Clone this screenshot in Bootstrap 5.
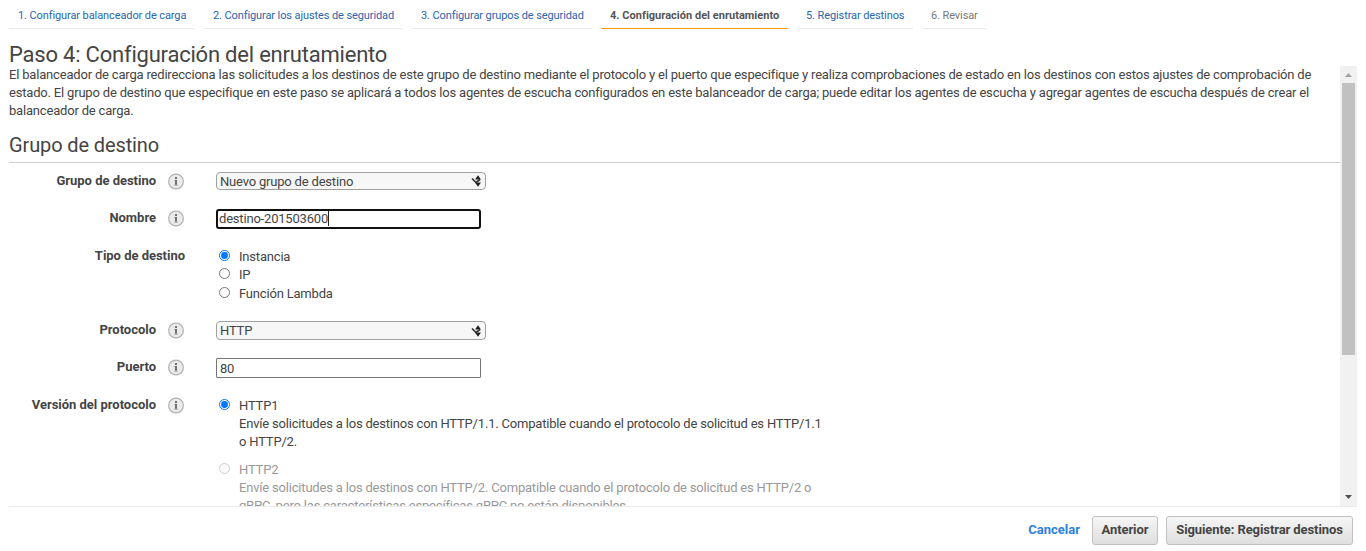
<!DOCTYPE html>
<html lang="es">
<head>
<meta charset="utf-8">
<meta name="viewport" content="width=device-width, initial-scale=1">
<title>Configuración del enrutamiento</title>
<link href="https://cdn.jsdelivr.net/npm/bootstrap@5.3.0/dist/css/bootstrap.min.css" rel="stylesheet">
<style>
body{font-family:Roboto,"Liberation Sans",sans-serif;font-size:13px;line-height:18px;letter-spacing:-.19px;color:#444;height:551px;overflow:hidden}
.steps{height:29px;gap:9px;padding-left:9px;font-size:11px;letter-spacing:-.1px}
.step{height:29px;padding:8px 0 0 9px;line-height:16px;border-bottom:1px solid #eaeaea;color:#2a65ad;text-decoration:none;white-space:nowrap}
.step.now{border-color:#ff9900;color:#555;font-weight:700;letter-spacing:.02px}
.step.later{color:#777}
.page-title{font-size:22px;line-height:26px;font-weight:400;height:37px;padding:13px 0 0 9px;margin:0;letter-spacing:-.21px}
.pane{height:440px;margin:0 9px;overflow:hidden}
.pane-body{width:1331px}
.intro{height:66px;margin:0;white-space:nowrap;letter-spacing:-.186px}
.section-title{font-size:20px;line-height:24px;font-weight:400;height:31px;margin:0;border-bottom:1px solid #ccc;padding-top:1px;letter-spacing:-.12px}
.field{height:37px}
.field-label{width:147px;text-align:right;font-weight:700;padding-top:9px;letter-spacing:-.02px;white-space:nowrap}
.field-label.wide{width:176px}
.field-label.low{padding-top:10px}
.info{width:16px;height:17px;margin:10px 32px 0 12px}
.wide + .ctl{margin-left:31px}
.ctl{padding-top:9px}
.ctl.choices{padding-top:11px}
.pick{width:270px;height:18px;border:1px solid #a0a0a0;border-radius:4px;background:#f7f7f7;padding:0 3px}
.pick.tall{height:19px}
.pick span{padding-top:2px}
.pick.tall span{padding-top:1px}
.entry{width:265px;height:20px;border:1px solid #767676;border-radius:1px;padding:0 3px;line-height:19px}
.entry.active{border:2px solid #101010;border-radius:3px;padding:0 2px 0 1px;line-height:16px}
.caret{width:1px;height:15px;background:#222}
.opt{gap:9px;padding-left:3px;white-space:nowrap}
.opt svg{width:11px;height:11px;margin-top:2px;flex:none}
.opt.third{margin-top:1px}
.opt.off{color:#999;margin-top:10px}
.bar{width:17px;background:#f1f1f1}
.thumb{width:13px;height:272px;background:#c1c1c1}
.foot{height:45px;margin:0 9px;border-top:1px solid #eaeaea;padding:9px 4px 0 0;font-weight:700;gap:8px}
.cancel{color:#2e80dd;text-decoration:none;padding:5px 4px 0 0;letter-spacing:0}
.act{height:29px;font-size:13px;font-weight:700;line-height:18px;letter-spacing:-.09px;color:#444;border:1px solid #c1c1c1;border-radius:3px;background:linear-gradient(#f6f6f6,#dedede);padding:3px 0 5px;white-space:nowrap}
</style>
<script src="https://cdn.jsdelivr.net/npm/bootstrap@5.3.0/dist/js/bootstrap.bundle.min.js"></script>
</head>
<body>
<svg class="d-none">
<defs>
<symbol id="i" viewBox="0 0 16 17"><circle cx="8" cy="8.500" r="7.400" fill="#ebebeb" stroke="#b3b3b3" stroke-width="1.200"/><path d="M7 4h2v2H7zM7 7h2v5.500H7z" fill="#707070"/><path d="M6 7h1v1H6zM6 11.500h4v1H6z" fill="#b5b5b5"/></symbol>
<symbol id="on" viewBox="0 0 11 11"><circle cx="5.500" cy="5.500" r="5" fill="#fff" stroke="#0075ff"/><circle cx="5.500" cy="5.500" r="3.400" fill="#0075ff"/></symbol>
<symbol id="no" viewBox="0 0 11 11"><circle cx="5.500" cy="5.500" r="5" fill="#fff" stroke="#767676"/></symbol>
<symbol id="dis" viewBox="0 0 11 11"><circle cx="5.500" cy="5.500" r="5" fill="#fafafa" stroke="#cfcfcf"/></symbol>
<symbol id="arr" viewBox="0 0 11 12"><path d="M7 .3 10 4.500H4zM4 7.500h6L7 11.700z" fill="#222"/><path d="m1 3.500 4 4 4-3" fill="none" stroke="#333" stroke-width="1.700"/></symbol>
</defs>
</svg>
<nav class="steps d-flex">
<a class="step" style="width:186px">1. Configurar balanceador de carga</a>
<a class="step" style="width:199px">2. Configurar los ajustes de seguridad</a>
<a class="step" style="width:180px">3. Configurar grupos de seguridad</a>
<a class="step now" style="width:187px">4. Configuración del enrutamiento</a>
<a class="step" style="width:116px">5. Registrar destinos</a>
<a class="step later" style="width:65px">6. Revisar</a>
</nav>
<h1 class="page-title">Paso 4: Configuración del enrutamiento</h1>
<main class="pane d-flex">
<div class="pane-body">
<p class="intro">El balanceador de carga redirecciona las solicitudes a los destinos de este grupo de destino mediante el protocolo y el puerto que especifique y realiza comprobaciones de estado en los destinos con estos ajustes de comprobación de<br>estado. El grupo de destino que especifique en este paso se aplicará a todos los agentes de escucha configurados en este balanceador de carga; puede editar los agentes de escucha y agregar agentes de escucha después de crear el<br>balanceador de carga.</p>
<h2 class="section-title">Grupo de destino</h2>
<div class="field d-flex"><div class="field-label">Grupo de destino</div><svg class="info"><use href="#i"/></svg><div class="ctl"><div class="pick d-flex justify-content-between align-items-center"><span>Nuevo grupo de destino</span><svg width="11" height="12"><use href="#arr"/></svg></div></div></div>
<div class="field d-flex"><div class="field-label">Nombre</div><svg class="info"><use href="#i"/></svg><div class="ctl"><div class="entry active d-flex"><span>destino-201503600</span><span class="caret"></span></div></div></div>
<div class="field d-flex" style="height:75px"><div class="field-label wide low">Tipo de destino</div><div class="ctl choices">
<div class="opt d-flex"><svg><use href="#on"/></svg><span>Instancia</span></div>
<div class="opt d-flex"><svg><use href="#no"/></svg><span>IP</span></div>
<div class="opt third d-flex"><svg><use href="#no"/></svg><span>Función Lambda</span></div></div></div>
<div class="field d-flex"><div class="field-label">Protocolo</div><svg class="info"><use href="#i"/></svg><div class="ctl"><div class="pick tall d-flex justify-content-between align-items-center"><span>HTTP</span><svg width="11" height="12"><use href="#arr"/></svg></div></div></div>
<div class="field d-flex"><div class="field-label">Puerto</div><svg class="info"><use href="#i"/></svg><div class="ctl"><div class="entry">80</div></div></div>
<div class="d-flex"><div class="field-label low">Versión del protocolo</div><svg class="info" style="margin-top:11px"><use href="#i"/></svg><div class="ctl choices">
<div class="opt d-flex"><svg><use href="#on"/></svg><span>HTTP1<br>Envíe solicitudes a los destinos con HTTP/1.1. Compatible cuando el protocolo de solicitud es HTTP/1.1<br>o HTTP/2.</span></div>
<div class="opt off d-flex"><svg><use href="#dis"/></svg><span>HTTP2<br>Envíe solicitudes a los destinos con HTTP/2. Compatible cuando el protocolo de solicitud es HTTP/2 o<br>gRPC, pero las características específicas gRPC no están disponibles.</span></div></div></div>
</div>
<div class="bar d-flex flex-column align-items-center">
<svg width="17" height="17"><path d="M5 11h7L8.500 7z" fill="#a3a3a3"/></svg>
<div class="thumb"></div>
<svg class="mt-auto" width="17" height="17"><path d="M5 6h7l-3.500 4z" fill="#505050"/></svg>
</div>
</main>
<footer class="foot d-flex justify-content-end">
<a class="cancel">Cancelar</a>
<button class="act" style="width:66px">Anterior</button>
<button class="act" style="width:187px">Siguiente: Registrar destinos</button>
</footer>
</body>
</html>
